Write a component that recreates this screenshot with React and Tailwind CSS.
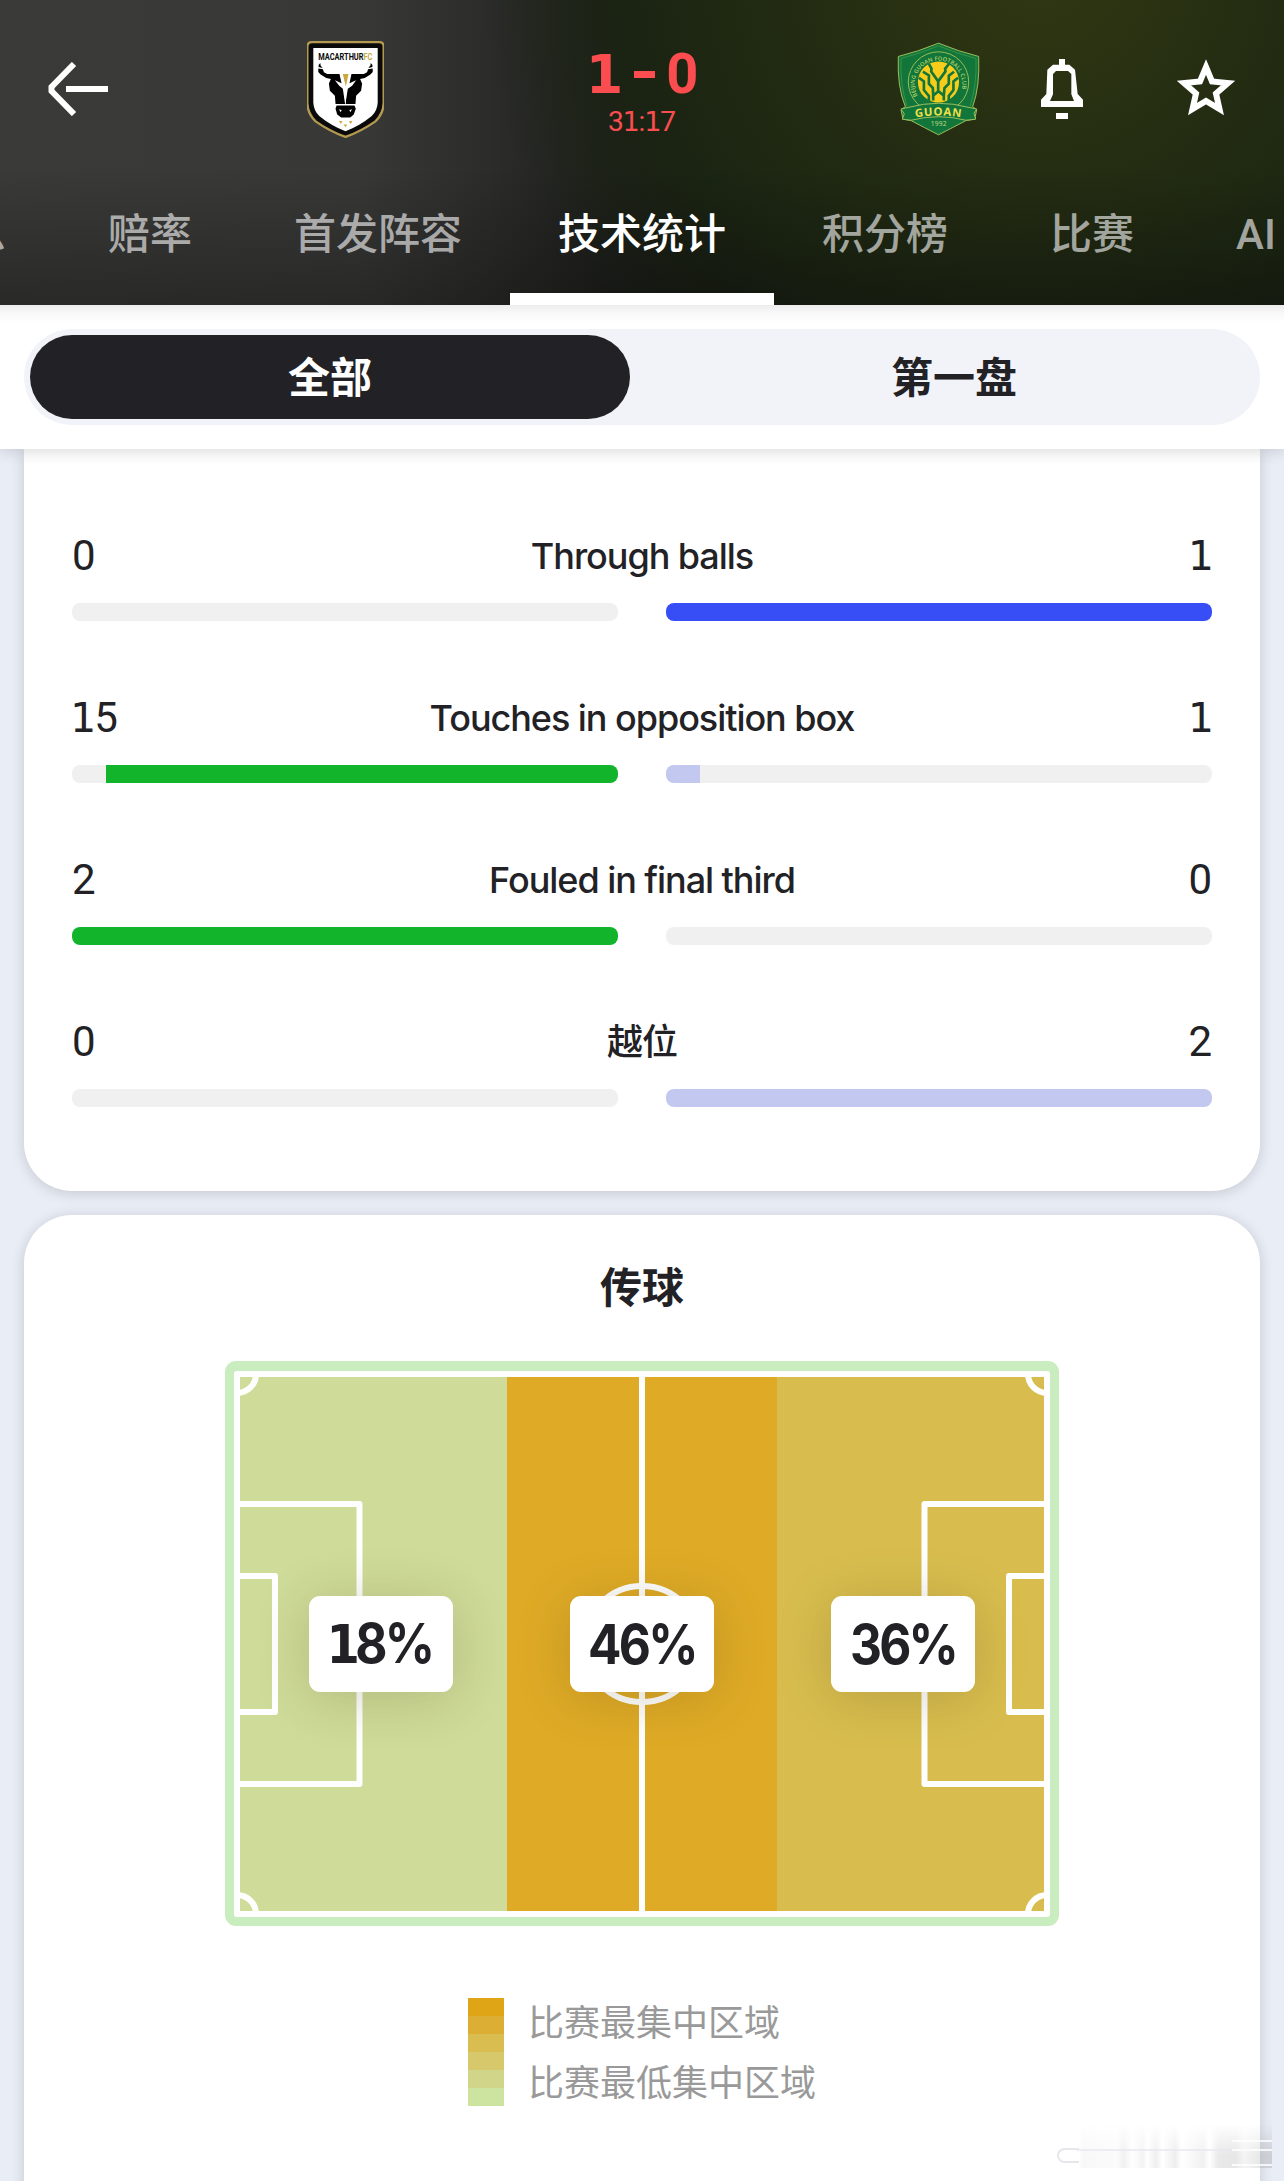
import { Fragment } from "react";
import clsx from "clsx";

const TABS = ["赛况信息", "赔率", "首发阵容", "技术统计", "积分榜", "比赛", "AI"];

const STATS = [
  { label: "Through balls", home: 0, away: 1, awayColor: "bg-[#374df5]" },
  {
    label: "Touches in opposition box",
    home: 15,
    away: 1,
    awayColor: "bg-[#c2c8f0]",
  },
  { label: "Fouled in final third", home: 2, away: 0 },
  { label: "越位", home: 0, away: 2, awayColor: "bg-[#c2c8f0]" },
];

const ZONES = ["18%", "46%", "36%"];

const LEGEND = [
  "bg-[#e0a417]",
  "bg-[#ddae34]",
  "bg-[#d9bd50]",
  "bg-[#d6c86b]",
  "bg-[#d1d589]",
  "bg-[#cde4a0]",
];

// the digit 1 needs a foot, so it is set in its own family
const Digits = ({ value }) =>
  String(value)
    .split("")
    .map((c, i) =>
      c === "1" ? (
        <span
          key={i}
          className="-mx-[0.045em] font-['DejaVu_Sans',sans-serif] text-[0.97em]"
        >
          1
        </span>
      ) : (
        <Fragment key={i}>{c}</Fragment>
      )
    );

const HomeLogo = () => (
  <svg viewBox="50 32 232 290" className="h-[97px] w-[77px]">
    <path
      d="M66 34H267Q281 34 281 48V218Q280 250 256 273Q215 302 166 320Q117 302 76 273Q52 250 51 218V48Q51 34 66 34Z"
      fill="#0a0a0a"
      stroke="#b39a50"
      strokeWidth="7"
    />
    <path
      d="M70 52H263V216Q262 240 245 257Q210 286 166 303Q122 286 87 257Q70 240 69 216V52Z"
      fill="#fff"
    />
    <text
      x="84"
      y="89"
      textLength="163"
      lengthAdjust="spacingAndGlyphs"
      className="font-['Roboto',sans-serif] text-[30px] font-bold"
      fill="#0a0a0a"
    >
      MACARTHUR
      <tspan fill="#c9a93f">FC</tspan>
    </text>
    <path d="M90 97L85 103V109L97 112L91 105ZM242 97L247 103V109L235 112L241 105Z" />
    <path d="M84 114L98 116L101 125L111 130H153L163 187L165 221H136L134 196L119 181L116 159L122 145L108 142L91 132L84 124Z" />
    <path d="M248 114L234 116L231 125L221 130H179L169 187L167 221H196L198 196L213 181L216 159L210 145L224 142L241 132L248 124Z" />
    <path
      d="M148 130L154 158L134 149L147 166L158 175L165 222L173 175L186 166L198 149L178 158L184 130Z"
      fill="#fff"
    />
    <path d="M158 130H175L167 168Z" fill="#c9a93f" />
    <path d="M139 225H193L197 235L191 252L180 261H153L141 252L136 235Z" />
    <path d="M147 236L155 240L150 245ZM185 236L177 240L182 245Z" fill="#fff" />
    <path
      d="M146 271l6 10 5-8zM160 282l6 9 5-8zM176 273l6 8 5-10z"
      fill="#c9a93f"
    />
  </svg>
);

const AwayLogo = () => (
  <svg viewBox="50 36 250 282" className="h-[94px] w-[83px]">
    <path
      d="M175 39Q235 64 296 79Q300 170 278 230L290 240L284 268L258 272Q220 292 175 315Q130 292 92 272L68 268L62 240L75 230Q50 170 54 79Q115 64 175 39Z"
      fill="#12763a"
      stroke="#9dbd5c"
      strokeWidth="3"
    />
    <path
      d="M175 47Q232 71 288 85Q291 165 270 228M175 47Q118 71 62 85Q59 165 80 228"
      fill="none"
      stroke="#4f9d4b"
      strokeWidth="2"
    />
    <circle cx="175" cy="156" r="91" fill="none" stroke="#b5c95c" strokeWidth="2.5" />
    <circle cx="175" cy="156" r="62" fill="#f8cc1b" />
    <path
      d="M146 101L154 116L153 124L174 154L196 124L195 116L207 101M128 125L146 136V161L158 174L159 197L175 184L191 197L193 174L206 161V137L222 125M116 143L131 154V180L146 198V216M234 143L220 154V180L206 198V216M174 154V184M159 197V212M191 197V212"
      fill="none"
      stroke="#12763a"
      strokeWidth="8"
    />
    <path id="crest-ring" d="M112 198A72 72 0 1 1 238 198" fill="none" />
    <text
      className="font-['Open_Sans',sans-serif] text-[17px] font-semibold"
      fill="#b9d36a"
    >
      <textPath href="#crest-ring" textLength="276">
        BEIJING GUOAN FOOTBALL CLUB
      </textPath>
    </text>
    <path
      d="M62 237L86 232Q175 208 264 232L290 237L282 250L287 268L257 271Q175 250 93 271L66 268L72 252Z"
      fill="#12763a"
      stroke="#9dbd5c"
      strokeWidth="3"
    />
    <path id="crest-name" d="M106 263Q175 250 246 263" fill="none" />
    <text
      className="font-['Open_Sans',sans-serif] text-[34px] font-bold"
      fill="#f1e04a"
    >
      <textPath href="#crest-name" textLength="137">
        GUOAN
      </textPath>
    </text>
    <text
      x="152"
      y="288"
      textLength="47"
      className="font-['Open_Sans',sans-serif] text-[20px]"
      fill="#c3dc85"
    >
      1992
    </text>
  </svg>
);

const Header = () => (
  <header className="relative z-20 h-[305px] overflow-hidden bg-[#121310] bg-[linear-gradient(180deg,transparent_55%,rgba(10,10,10,.35)_100%),radial-gradient(ellipse_560px_560px_at_1040px_-40px,#303812_0%,#242d12_40%,#1b2512_70%,transparent_100%),linear-gradient(90deg,#3a3a39_0%,#383837_28%,#2c2c2b_38%,#1d1e1b_48%,#131611_58%,#172012_75%,#16200f_92%,#121810_100%)]">
    <div className="flex h-[178px] items-start">
      <svg
        viewBox="0 0 60 54"
        className="ml-12 mt-[62px] h-[54px] w-[60px]"
        fill="none"
        stroke="#fff"
        strokeWidth="6"
      >
        <path d="M26 2L3.500 25V29L26 52M18 27H60" />
      </svg>
      <div className="ml-[199px] mt-[41px]">
        <HomeLogo />
      </div>
      <div className="ml-[184px] mt-[38px] flex w-[148px] flex-col items-center font-['Roboto',sans-serif] text-[#fb4c4f]">
        <div className="flex h-[72px] items-center text-[56px] font-bold">
          <span className="font-['DejaVu_Sans',sans-serif] text-[54px]">1</span>
          <span className="mx-[11px] h-[7px] w-[21px] bg-[#fb4c4f]" />
          <span>0</span>
        </div>
        <div className="-mt-[4px] h-8 text-[28px] leading-8">
          <Digits value="31:17" />
        </div>
      </div>
      <div className="ml-[181px] mt-[42px]">
        <AwayLogo />
      </div>
      <svg viewBox="483 87 126 180" className="ml-[61px] mt-[59px] h-[60px] w-[42px]">
        <path
          d="M537 87H555V104H568L585 119L593 192L609 209V231H483V209L499 192L502 119L519 104H537ZM528 123L519 132V193L510 213H582L574 193V132L564 123Z"
          fill="#fff"
          fillRule="evenodd"
        />
        <rect x="528" y="249" width="36" height="18" fill="#fff" />
      </svg>
      <svg viewBox="0 0 60 57" className="ml-[93px] mt-[59px] h-[57px] w-[60px]">
        <path
          d="M30 8L36 22.500L52 24L40 34.500L43.500 50L30 42L16.500 50L20 34.500L8 24L24 22.500Z"
          fill="none"
          stroke="#fff"
          strokeWidth="6"
        />
      </svg>
    </div>
    <nav className="-ml-[210px] flex h-[127px] font-['Roboto','Noto_Sans_CJK_SC',sans-serif] text-[42px] font-medium text-white/60">
      {TABS.map((tab) => (
        <div
          key={tab}
          className={clsx(
            "flex h-full shrink-0 justify-center border-b-[12px] px-12 pt-[27px] leading-[60px]",
            tab === "技术统计" ? "border-white text-white" : "border-transparent",
            tab !== "AI" && "min-w-[192px]"
          )}
        >
          {tab}
        </div>
      ))}
    </nav>
  </header>
);

const Bar = ({ value, total, color, alignEnd }) => (
  <div
    className={clsx(
      "flex h-[18px] flex-1 overflow-hidden rounded-lg bg-[#f0f0f0]",
      alignEnd && "justify-end"
    )}
  >
    <div
      className={clsx("h-full", color)}
      style={{ width: `${(value / total) * 100}%` }}
    />
  </div>
);

const StatRow = ({ label, home, away, awayColor }) => {
  const total = home + away;
  return (
    <div>
      <div className="flex h-[54px] items-center justify-between pt-[2px] font-['Roboto','Noto_Sans_CJK_SC',sans-serif] text-[42px] text-[#222226]">
        <span className="w-24 leading-[54px]">
          <Digits value={home} />
        </span>
        <span className="font-['Inter','Noto_Sans_CJK_SC',sans-serif] text-[36px] font-medium leading-[54px] tracking-[-1.05px]">
          {label}
        </span>
        <span className="w-24 text-right leading-[54px]">
          <Digits value={away} />
        </span>
      </div>
      <div className="mt-[21px] flex gap-12">
        <Bar value={home} total={total} color="bg-[#12b42c]" alignEnd />
        <Bar value={away} total={total} color={awayColor} />
      </div>
    </div>
  );
};

const Pitch = () => (
  <div className="relative mx-auto mt-[44px] h-[565px] w-[834px]">
    <svg viewBox="0 0 834 565" className="h-full w-full">
      <rect width="834" height="565" rx="11" fill="#caedbf" />
      <rect x="12" y="13" width="270" height="540" fill="#cfdb98" />
      <rect x="282" y="13" width="270" height="540" fill="#dfab26" />
      <rect x="552" y="13" width="270" height="540" fill="#d8bd4e" />
      <g fill="none" stroke="#fff" strokeWidth="6" strokeLinejoin="round">
        <rect x="12" y="13" width="810" height="540" />
        <path d="M417 13V553" />
        <circle cx="417" cy="283" r="58" />
        <path d="M12 143H134.500V423H12M12 215H50V351H12" />
        <path d="M822 143H699.500V423H822M822 215H784V351H822" />
        <path d="M31 13A19 19 0 0 1 12 32M12 534A19 19 0 0 1 31 553" />
        <path d="M803 13A19 19 0 0 0 822 32M822 534A19 19 0 0 0 803 553" />
      </g>
    </svg>
    <div className="absolute inset-0 flex items-center justify-center gap-[117px] pt-px">
      {ZONES.map((zone) => (
        <div
          key={zone}
          className="flex h-24 w-36 items-center justify-center rounded-[11px] bg-white font-['Inter',sans-serif] text-[55px] font-bold tracking-[-3px] text-[#222226] shadow-[0_6px_54px_rgba(60,50,20,0.2)]"
        >
          <span className="scale-x-[0.9]">
            <Digits value={zone} />
          </span>
        </div>
      ))}
    </div>
  </div>
);

const Legend = () => (
  <div className="ml-[444px] mt-[72px] flex">
    <div className="h-[108px] w-9">
      {LEGEND.map((color) => (
        <div key={color} className={clsx("h-[18px]", color)} />
      ))}
    </div>
    <div className="-mt-[4px] ml-6 text-[36px] leading-[60px] text-[#999]">
      <p>比赛最集中区域</p>
      <p>比赛最低集中区域</p>
    </div>
  </div>
);

const Watermark = () => (
  <div className="absolute left-[1057px] top-[2124px] h-[44px] w-[215px] overflow-hidden">
    <div className="h-full w-full bg-[linear-gradient(90deg,transparent_0%,transparent_5%,rgba(255,255,255,.6)_10%,rgba(120,120,120,.05)_12%,rgba(120,120,120,.03)_28%,rgba(120,120,120,.11)_31%,transparent_35%,rgba(120,120,120,.09)_40%,transparent_42%,rgba(120,120,120,.12)_46%,transparent_49%,rgba(120,120,120,.13)_55%,transparent_58%,rgba(120,120,120,.11)_68%,transparent_71%,rgba(120,120,120,.16)_75%,rgba(120,120,120,.18)_83%,rgba(120,120,120,.08)_87%,rgba(120,120,120,.25)_100%)] [mask-image:linear-gradient(180deg,transparent,black_70%)]" />
    <div className="absolute bottom-[5px] left-0 h-[15px] w-[22px] rounded-l-full border-2 border-r-0 border-gray-200" />
    <div className="absolute bottom-[17px] left-5 h-[2px] w-44 bg-gray-200/70" />
    <div className="absolute bottom-[2px] right-0 flex w-10 flex-col gap-[7px]">
      <span className="h-[2px] bg-white/80" />
      <span className="h-[2px] bg-white/80" />
      <span className="mt-[6px] h-[2px] bg-white/80" />
    </div>
  </div>
);

const App = () => {
  return (
    <div className="relative h-[2181px] w-[1284px] overflow-hidden bg-[#e9edf6] font-['Roboto','Noto_Sans_CJK_SC',sans-serif]">
      <Header />

      <div className="relative z-10 h-[144px] bg-white bg-[linear-gradient(180deg,#ececec_0px,#f8f8f8_8px,#fff_18px)] px-6 pt-6 shadow-[0_2px_14px_rgba(0,0,0,0.16)]">
        <div className="grid h-24 grid-cols-2 gap-6 rounded-[48px] bg-[#f2f3f8] p-[6px] text-[42px] font-bold text-[#222226]">
          <div className="flex items-center justify-center rounded-[42px] bg-[#222226] pt-[3px] text-white">
            全部
          </div>
          <div className="flex items-center justify-center pt-[3px]">
            第一盘
          </div>
        </div>
      </div>

      <section className="mx-6 flex h-[742px] flex-col gap-[69px] rounded-b-[48px] bg-white px-12 pt-[79px] shadow-[0_2px_14px_rgba(0,0,0,0.16)]">
        {STATS.map((stat) => (
          <StatRow key={stat.label} {...stat} />
        ))}
      </section>

      <section className="mx-6 mt-6 h-[1000px] rounded-t-[48px] bg-white pt-[42px] shadow-[0_2px_14px_rgba(0,0,0,0.16)]">
        <h2 className="h-[60px] pt-[2px] text-center text-[42px] font-bold leading-[60px] text-[#222226]">
          传球
        </h2>
        <Pitch />
        <Legend />
      </section>

      <Watermark />
    </div>
  );
};

export default App;
